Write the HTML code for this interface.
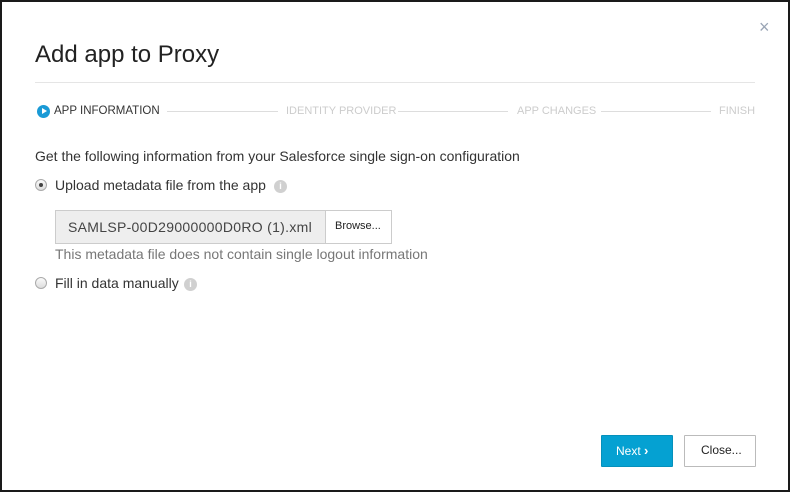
<!DOCTYPE html>
<html><head><style>
*{margin:0;padding:0;box-sizing:border-box}
body{width:790px;height:492px;overflow:hidden;background:#fff;font-family:"Liberation Sans",sans-serif;color:#333;position:relative}
.frame{position:absolute;left:0;top:0;width:790px;height:492px;border:2px solid #1a1a1a}
.a{position:absolute;white-space:nowrap}
.step{font-size:11.5px;top:105px}
.line{position:absolute;height:1px;background:#ddd;top:111px}
.radio{position:absolute;width:12px;height:12px;border-radius:50%;border:1px solid #aaa;background:linear-gradient(#fafafa,#ddd)}
.info{position:absolute;width:13px;height:13px;border-radius:50%;background:#d0d0d0;color:#fff;font-size:9px;text-align:center;line-height:13px;font-weight:bold}
</style></head><body>
<div class="frame"></div>
<div class="a" style="left:759px;top:17px;font-size:18px;color:#9aa5b5">×</div>
<div class="a" style="left:35px;top:41px;font-size:24px;color:#222">Add app to Proxy</div>
<div style="position:absolute;left:35px;top:82px;width:720px;height:1px;background:#e5e5e5"></div>
<div style="position:absolute;left:37px;top:105px;width:13px;height:13px;border-radius:50%;background:#1a9ad6"></div>
<div style="position:absolute;left:42px;top:108px;width:0;height:0;border-left:5px solid #fff;border-top:3.5px solid transparent;border-bottom:3.5px solid transparent"></div>
<div class="a step" style="left:54px;color:#333">APP INFORMATION</div>
<div class="line" style="left:167px;width:111px"></div>
<div class="a step" style="left:286px;color:#ccc;font-size:11px">IDENTITY PROVIDER</div>
<div class="line" style="left:398px;width:110px"></div>
<div class="a step" style="left:517px;color:#ccc;font-size:11px">APP CHANGES</div>
<div class="line" style="left:601px;width:110px"></div>
<div class="a step" style="left:719px;color:#ccc;font-size:11px">FINISH</div>
<div class="a" style="left:35px;top:148px;font-size:14px">Get the following information from your Salesforce single sign-on configuration</div>
<div class="radio" style="left:35px;top:179px"></div>
<div style="position:absolute;left:39px;top:183px;width:4px;height:4px;border-radius:50%;background:#444"></div>
<div class="a" style="left:55px;top:177px;font-size:14px">Upload metadata file from the app</div>
<div class="info" style="left:274px;top:180px">i</div>
<div style="position:absolute;left:55px;top:210px;width:337px;height:34px;border:1px solid #ccc;background:#eee"></div>
<div class="a" style="left:68px;top:219px;font-size:14px;letter-spacing:0.3px;color:#444">SAMLSP-00D29000000D0RO (1).xml</div>
<div style="position:absolute;left:325px;top:210px;width:67px;height:34px;border:1px solid #ccc;background:#fff"></div>
<div class="a" style="left:335px;top:220px;font-size:11px;color:#222">Browse...</div>
<div class="a" style="left:55px;top:246px;font-size:14px;color:#777">This metadata file does not contain single logout information</div>
<div class="radio" style="left:35px;top:277px"></div>
<div class="a" style="left:55px;top:275px;font-size:14px">Fill in data manually</div>
<div class="info" style="left:184px;top:278px">i</div>
<div style="position:absolute;left:601px;top:435px;width:72px;height:32px;background:#05a1d2;border:1px solid #0590bb;border-radius:1px"></div>
<div class="a" style="left:616px;top:443px;font-size:12px;color:#fff">Next <b style="font-size:13px">›</b></div>
<div style="position:absolute;left:684px;top:435px;width:72px;height:32px;background:#fff;border:1px solid #bbb;border-radius:1px"></div>
<div class="a" style="left:701px;top:443px;font-size:12px;color:#222">Close...</div>
</body></html>
